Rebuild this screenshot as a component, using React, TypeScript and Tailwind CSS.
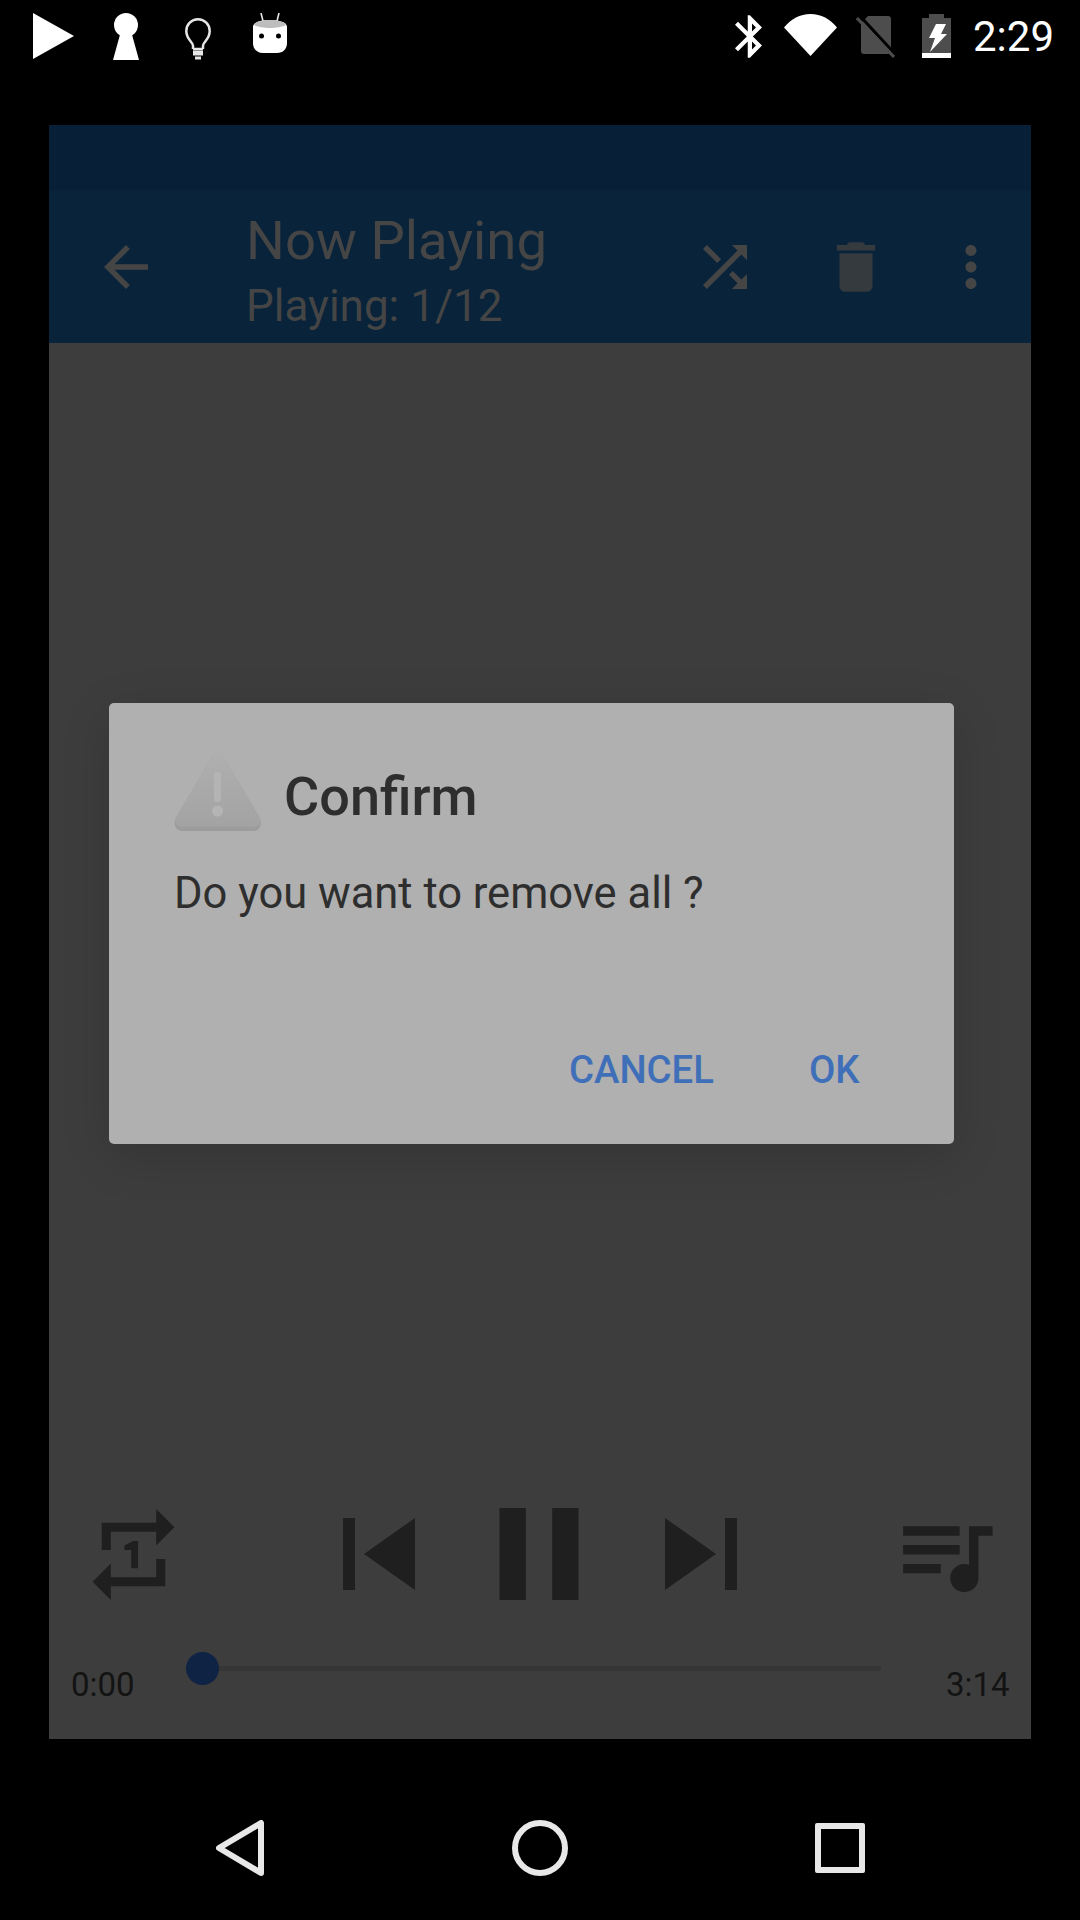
const ICON = {
  back: "M20 11H7.83l5.59-5.59L12 4l-8 8 8 8 1.41-1.41L7.83 13H20v-2z",
  shuffle:
    "M10.59 9.17L5.41 4 4 5.41l5.17 5.17 1.42-1.41zM14.5 4l2.04 2.04L4 18.59 5.41 20 17.96 7.46 20 9.5V4h-5.5zm.33 9.41l-1.41 1.41 3.13 3.13L14.5 20H20v-5.5l-2.04 2.04-3.13-3.13z",
  trash: "M6 19c0 1.1.9 2 2 2h8c1.1 0 2-.9 2-2V7H6v12zM19 4h-3.5l-1-1h-5l-1 1H5v2h14V4z",
  more: "M12 8c1.1 0 2-.9 2-2s-.9-2-2-2-2 .9-2 2 .9 2 2 2zm0 2c-1.1 0-2 .9-2 2s.9 2 2 2 2-.9 2-2-.9-2-2-2zm0 6c-1.1 0-2 .9-2 2s.9 2 2 2 2-.9 2-2-.9-2-2-2z",
  repeatOne:
    "M7 7h10v3l4-4-4-4v3H5v6h2V7zm10 10H7v-3l-4 4 4 4v-3h12v-6h-2v4zm-4-2V9h-1l-2 1v1h1.5v4H13z",
  prev: "M6 6h2v12H6zm3.5 6l8.5 6V6z",
  pause: "M6 19h4V5H6v14zm8-14v14h4V5h-4z",
  next: "M6 18l8.5-6L6 6v12zM16 6v12h2V6h-2z",
  queue:
    "M15 6H3v2h12V6zm0 4H3v2h12v-2zM3 16h8v-2H3v2zM17 6v8.18c-.31-.11-.65-.18-1-.18-1.66 0-3 1.34-3 3s1.34 3 3 3 3-1.34 3-3V8h3V6h-5z",
  bluetooth:
    "M17.71 7.71L12 2h-1v7.59L6.41 5 5 6.41 10.59 12 5 17.59 6.41 19 11 14.41V22h1l5.71-5.71-4.3-4.29 4.3-4.29zM13 5.83l1.88 1.88L13 9.59V5.83zm1.88 10.46L13 18.17v-3.76l1.88 1.88z",
};

function Mat({ d, className }: { d: string; className: string }) {
  return (
    <svg viewBox="0 0 24 24" fill="currentColor" className={className}>
      <path d={d} />
    </svg>
  );
}

function StatusBar() {
  return (
    <div className="flex h-[125px] justify-between pl-[33px] pr-[26px]">
      <div className="flex items-start text-white">
        {/* play */}
        <svg viewBox="0 0 41 46" className="mt-[13px] h-[46px] w-[41px]" fill="#fff">
          <path d="M0 0L41 23L0 46z" />
        </svg>
        {/* keyhole */}
        <svg viewBox="0 0 26 47" className="ml-[39px] mt-[13px] h-[47px] w-[26px]" fill="#fff">
          <circle cx="13" cy="12" r="12" />
          <path d="M8 18h10l8 29H0z" />
        </svg>
        {/* bulb */}
        <svg viewBox="0 0 26 42" className="ml-[46px] mt-[18px] h-[42px] w-[26px]" fill="none" stroke="#e6e6e6" strokeWidth="2.5">
          <path d="M8 31v-3.5C8 24 1.3 21.5 1.3 13a11.7 11.7 0 0 1 23.4 0c0 8.500-6.700 11-6.700 14.500V31" />
          <path d="M8 31h10" />
          <path d="M8 35h10" strokeWidth="5" />
          <path d="M10 40h6" strokeWidth="3" />
        </svg>
        {/* android head */}
        <svg viewBox="0 0 34 40" className="ml-[42px] mt-[13px] h-[40px] w-[34px]">
          <path d="M8 0l2 8M26 0l-2 8" stroke="#e6e6e6" strokeWidth="1.6" />
          <path d="M0 14c0-5 8-7 17-7s17 2 17 7v16c0 6-4 10-10 10H10C4 40 0 36 0 30z" fill="#fff" />
          <path d="M1 12c1-3 8-5 16-5s15 2 16 5c-3 2-10 3-16 3S4 14 1 12z" fill="#bdbdbd" />
          <circle cx="8.500" cy="23" r="2.500" fill="#000" />
          <circle cx="25.500" cy="23" r="2.500" fill="#000" />
        </svg>
      </div>
      <div className="flex items-start text-white">
        <svg viewBox="5 2 12.710 20" className="mt-[15px] h-[43px] w-[27px]" fill="#fff">
          <path d={ICON.bluetooth} />
        </svg>
        {/* wifi */}
        <svg viewBox="0 0 53 42" className="ml-[22px] mt-[14px] h-[42px] w-[53px]" fill="#fff">
          <path d="M0 13.500C7 5 16 0 26.500 0S46 5 53 13.500L26.500 42z" />
        </svg>
        {/* sim, none */}
        <svg viewBox="0 0 39 42" className="ml-[19px] mt-[16px] h-[42px] w-[39px]">
          <path d="M12 0h20a3 3 0 0 1 3 3v32a3 3 0 0 1-3 3H8a3 3 0 0 1-3-3V7z" fill="#4d4d4d" />
          <path d="M4 0l35 38" stroke="#000" strokeWidth="3" />
          <path d="M1 2l37 39" stroke="#4d4d4d" strokeWidth="3" />
        </svg>
        {/* battery charging */}
        <svg viewBox="0 0 29 44" className="ml-[27px] mt-[14px] h-[44px] w-[29px]">
          <path d="M7 0h15v4h7v35H0V4h7z" fill="#4d4d4d" />
          <path d="M0 39h29v5H0z" fill="#fff" />
          <path d="M14 10h10l-5 10h6L8 38l5-14H7z" fill="#fff" />
        </svg>
        <span className="ml-[22px] mt-[12px] font-['Roboto',sans-serif] text-[42px] leading-[50px] text-white">
          2:29
        </span>
      </div>
    </div>
  );
}

function Toolbar() {
  return (
    <div className="shrink-0 text-[#454545]">
      <div className="h-[65px] bg-[#081f38]" />
      <div className="flex h-[153px] bg-[#08233a]">
        <Mat d={ICON.back} className="ml-[44px] mt-[44px] h-[66px] w-[66px]" />
        <div className="ml-[87px] flex w-[400px] flex-col">
          <span className="mt-[18px] text-[54.500px] leading-[64px]">Now Playing</span>
          <span className="mt-[8px] text-[44px] leading-[52px]">Playing: 1/12</span>
        </div>
        <Mat d={ICON.shuffle} className="ml-[46px] mt-[44px] h-[66px] w-[66px]" />
        <Mat d={ICON.trash} className="ml-[65px] mt-[44px] h-[66px] w-[66px] text-[#343a3e]" />
        <Mat d={ICON.more} className="ml-[49px] mt-[44px] h-[66px] w-[66px]" />
      </div>
    </div>
  );
}

function Controls() {
  return (
    <div className="mt-auto text-[#1f1f1f]">
      <div className="ml-[30px] flex items-center">
        <Mat d={ICON.repeatOne} className="h-[109px] w-[109px]" />
        <Mat d={ICON.prev} className="ml-[119px] h-[144px] w-[144px]" />
        <Mat d={ICON.pause} className="ml-[9px] h-[158px] w-[158px]" />
        <Mat d={ICON.next} className="ml-[11px] h-[144px] w-[144px]" />
        <Mat d={ICON.queue} className="ml-[116px] h-[113px] w-[113px]" />
      </div>
      <div className="mt-[33px] flex h-[73px] items-start">
        <span className="ml-[22px] mt-[-1px] w-[72px] text-[33px] leading-[40px] text-[#131313]">0:00</span>
        <div className="relative ml-[59px] h-[5px] w-[679px] bg-[#363636]">
          <div className="absolute left-[-16px] top-[-14px] h-[33px] w-[33px] rounded-full bg-[#0f2344]" />
        </div>
        <span className="ml-[65px] mt-[-1px] text-[33px] leading-[40px] text-[#131313]">3:14</span>
      </div>
    </div>
  );
}

function ConfirmDialog() {
  return (
    <div className="absolute left-[60px] top-[578px] flex h-[441px] w-[845px] flex-col rounded-[5px] bg-[#b0b0b0] shadow-[0_12px_50px_rgba(0,0,0,0.14)]">
      <div className="ml-[65px] mt-[50px] flex items-start">
        <svg viewBox="0 0 87 78" className="h-[78px] w-[87px]">
          <defs>
            <linearGradient id="warn" x1="0" y1="0" x2="0" y2="1">
              <stop offset="0" stopColor="#afafaf" />
              <stop offset="1" stopColor="#a3a3a3" />
            </linearGradient>
          </defs>
          <path d="M43.500 0c3 0 5 2 7 5.500l35 59c3 6 1 13.500-6 13.500H8C1 78-1 70.500 2 64.500l35-59C39 2 40.500 0 43.500 0z" fill="#9c9c9c" />
          <path d="M43.500 0c3 0 5 2 7 5.500l35 59c2 4 0 9-5 9H7c-5 0-7-5-5-9l35-59C39 2 40.500 0 43.500 0z" fill="url(#warn)" />
          <rect x="40" y="19" width="7" height="30" rx="3.500" fill="#b4b4b4" />
          <circle cx="43.500" cy="58" r="5.500" fill="#b4b4b4" />
        </svg>
        <span className="ml-[23px] mt-[13px] text-[54px] font-medium leading-[62px] text-[#2e2e2e]">Confirm</span>
      </div>
      <p className="ml-[65px] mt-[38px] text-[43.500px] leading-[50px] text-[#2e2e2e]">Do you want to remove all ?</p>
      <div className="ml-[460px] mt-[128px] flex text-[38.300px] font-medium leading-[46px] text-[#3f6fb8]">
        <span>CANCEL</span>
        <span className="ml-[95px]">OK</span>
      </div>
    </div>
  );
}

function NavBar() {
  return (
    <div className="flex flex-1 items-start pt-[81px]">
      <svg viewBox="0 0 48 56" className="ml-[216px] h-[56px] w-[48px]" fill="none" stroke="#e8e8e8" strokeWidth="6" strokeLinejoin="round">
        <path d="M45 3v50L3 28z" />
      </svg>
      <div className="ml-[248px] h-[56px] w-[56px] rounded-full border-[6px] border-[#e8e8e8]" />
      <div className="ml-[247px] mt-[3px] h-[50px] w-[50px] rounded-[2px] border-[6px] border-[#e8e8e8]" />
    </div>
  );
}

export default function App() {
  return (
    <div className="flex h-[1920px] w-[1080px] flex-col overflow-hidden bg-black font-['Roboto',sans-serif]">
      <StatusBar />
      <div className="relative mx-[49px] flex h-[1614px] shrink-0 flex-col bg-[#3d3d3d]">
        <Toolbar />
        <Controls />
        <ConfirmDialog />
      </div>
      <NavBar />
    </div>
  );
}
